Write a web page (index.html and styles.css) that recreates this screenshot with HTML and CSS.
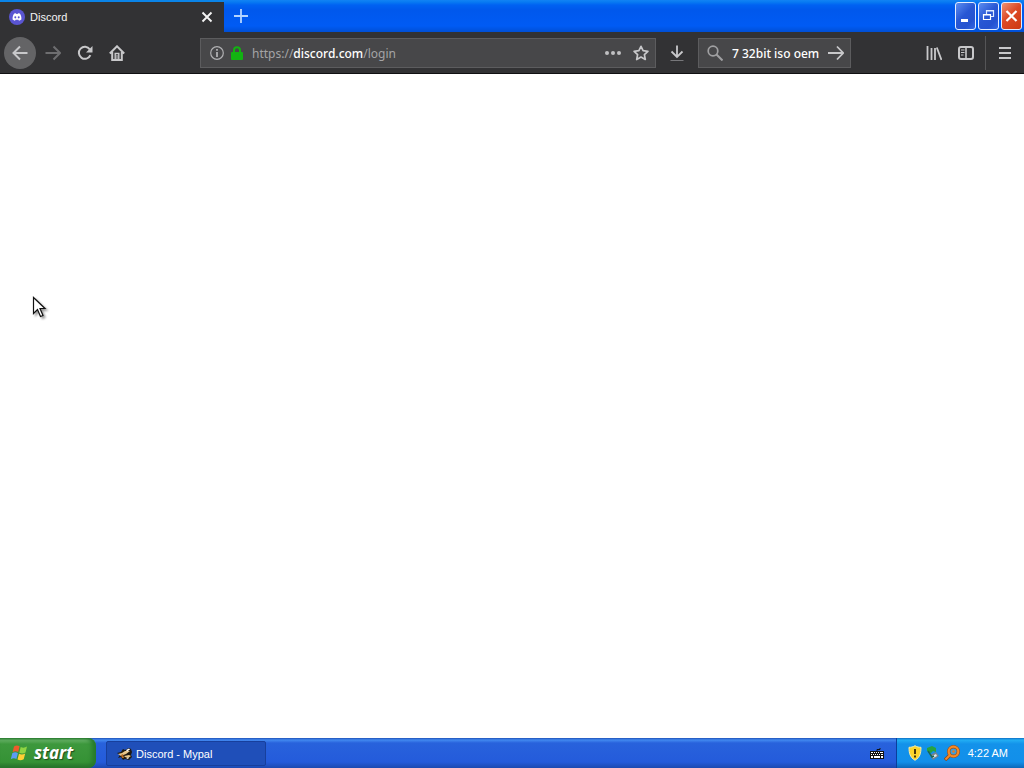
FILE: index.html
```
<!DOCTYPE html>
<html lang="en">

<head>
    <meta charset="UTF-8">
    <meta name="viewport" content="width=device-width, initial-scale=1.0">
    <title>Discord - Mypal</title>
    <link rel="stylesheet" href="styles.css">
</head>

<body>
    <div class="browser">
        <!-- tabs and window buttons -->
        <header class="titlebar">
            <div class="tab">
                <svg class="favicon" width="16" height="16" viewBox="0 0 16 16">
                    <circle cx="8" cy="8" r="8" fill="#5a55d2" />
                    <path d="M5.2 4.6 7 4.2l.4.7h1.2l.4-.7 1.8.4c1.2 1.7 1.8 3.6 1.6 5.9-.8.7-1.6 1-2.4 1.2l-.6-1H6.6l-.6 1c-.8-.2-1.6-.5-2.4-1.2-.2-2.3.4-4.2 1.6-5.9z" fill="#fff" />
                    <ellipse cx="6.3" cy="8.3" rx="1" ry="1.1" fill="#5a55d2" />
                    <ellipse cx="9.7" cy="8.3" rx="1" ry="1.1" fill="#5a55d2" />
                </svg>
                <span class="tab-label">Discord</span>
                <button class="tab-close" aria-label="Close tab">
                    <svg width="12" height="12" viewBox="0 0 12 12"><path d="M1.5 1.5l9 9M10.5 1.5l-9 9" stroke="#f4f4f4" stroke-width="1.9" fill="none" /></svg>
                </button>
            </div>
            <button class="new-tab" aria-label="New tab">
                <svg width="16" height="16" viewBox="0 0 16 16"><path d="M8 1v14M1 8h14" stroke="#b4d4ff" stroke-width="1.8" fill="none" /></svg>
            </button>
            <div class="window-buttons">
                <button class="win" aria-label="Minimize">
                    <svg width="19" height="26" viewBox="0 0 19 26"><path d="M5 16h7v3H5z" fill="#fff" /></svg>
                </button>
                <button class="win" aria-label="Restore">
                    <svg width="19" height="26" viewBox="0 0 19 26"><path d="M7.5 11V7.5h7v6H12M7 8h8" fill="none" stroke="#dceaff" stroke-width="1.2" /><path d="M4.500 11.5h7v5h-7zM4 12h8" fill="none" stroke="#fff" stroke-width="1.2" /></svg>
                </button>
                <button class="win win-close" aria-label="Close">
                    <svg width="19" height="26" viewBox="0 0 19 26"><path d="M4.5 8l10 10M14.5 8l-10 10" stroke="#fff" stroke-width="2.2" fill="none" /></svg>
                </button>
            </div>
        </header>

        <!-- navigation -->
        <nav class="toolbar">
            <button class="tool back" aria-label="Back">
                <svg width="16" height="16" viewBox="0 0 16 16"><path d="M8 1.5L1.5 8 8 14.5M2 8h13.5" /></svg>
            </button>
            <button class="tool forward" aria-label="Forward" disabled>
                <svg width="16" height="16" viewBox="0 0 16 16"><path d="M8.5 1.5L15 8l-6.5 6.5M14.5 8H.5" /></svg>
            </button>
            <button class="tool" aria-label="Reload">
                <svg width="16" height="16" viewBox="0 0 16 16"><path d="M13.4 10.2A6 6 0 1 1 12.8 4.400" /><path d="M15.5 1v6.5H9z" fill="#c8c8ca" stroke="none" /></svg>
            </button>
            <button class="tool" aria-label="Home">
                <svg width="16" height="16" viewBox="0 0 16 16"><path d="M.8 8.5L8 1.3l7.2 7.2M3.2 7v8h9.6V7" /><path d="M6.2 15V8.5h3.6V15" stroke-width="1.4" /><path d="M8 10v5" stroke-width="1" /></svg>
            </button>
            <div class="spacer"></div>
            <div class="field url-field">
                <svg width="14" height="14" viewBox="0 0 14 14" fill="none" stroke="#b0b0b2"><circle cx="7" cy="7" r="6.3" stroke-width="1.2" /><path d="M7 6v5M7 3v1.8" stroke-width="1.8" /></svg>
                <svg class="lock" width="12" height="14" viewBox="0 0 12 14"><path d="M3 7V4.2a3 3 0 0 1 6 0V7" fill="none" stroke="#12b312" stroke-width="2" /><rect y="6" width="12" height="8" rx="1" fill="#12b312" /></svg>
                <a class="url" href="#">https://<b>discord.com</b>/login</a>
                <button class="in-field" aria-label="Page actions">
                    <svg width="16" height="16" viewBox="0 0 16 16" fill="#c0c0c2"><circle cx="2" cy="8" r="2" /><circle cx="8" cy="8" r="2" /><circle cx="14" cy="8" r="2" /></svg>
                </button>
                <button class="in-field" aria-label="Bookmark">
                    <svg width="16" height="16" viewBox="0 0 16 16"><path d="M8 1.3l2.1 4.4 4.8.6-3.5 3.3.9 4.9L8 12.1l-4.3 2.4.9-4.9L1.1 6.3l4.8-.6z" fill="none" stroke="#c8c8ca" stroke-width="1.7" stroke-linejoin="round" /></svg>
                </button>
            </div>
            <button class="tool download" aria-label="Downloads">
                <svg width="16" height="16" viewBox="0 0 16 16"><path d="M8 .5v11M2.5 6.5L8 12l5.5-5.5" stroke-width="1.8" /><path d="M1.5 15.5h13" stroke="#77777a" stroke-width="1" /></svg>
            </button>
            <form class="field search-field">
                <svg width="16" height="16" viewBox="0 0 16 16" fill="none" stroke="#a0a0a2"><circle cx="6" cy="6" r="4.8" stroke-width="1.7" /><path d="M9.5 9.5l6 6" stroke-width="2" /></svg>
                <input type="text" aria-label="Search" value="7 32bit iso oem">
                <button class="in-field" type="button" aria-label="Go">
                    <svg width="16" height="16" viewBox="0 0 16 16"><path d="M9 1.5L15.2 8 9 14.5M14.8 8H0" fill="none" stroke="#c8c8ca" stroke-width="1.8" /></svg>
                </button>
            </form>
            <div class="spacer"></div>
            <button class="tool" aria-label="Library">
                <svg width="16" height="16" viewBox="0 0 16 16"><path d="M1.5 1v14M5.5 3v12M9 3v12M10.8 2.5L15.5 15" stroke-width="1.8" /></svg>
            </button>
            <button class="tool" aria-label="Sidebars">
                <svg width="16" height="16" viewBox="0 0 16 16"><rect x="1" y="2" width="14" height="12" rx="2" /><path d="M8 2v12" stroke-width="1.6" /><path d="M3 5h3.5M3 7.5h3.5M3 10h2.5" stroke-width="1" /></svg>
            </button>
            <div class="separator"></div>
            <button class="tool" aria-label="Menu">
                <svg width="16" height="16" viewBox="0 0 16 16"><path d="M2 3h12M2 8h12M2 13h12" /></svg>
            </button>
        </nav>

        <main class="page"></main>
    </div>

    <!-- taskbar -->
    <footer class="taskbar">
        <button class="start">
            <svg width="20" height="20" viewBox="0 0 20 20">
                <path d="M4 3.5C6 2 7.800 2.200 9.6 3.3L8.2 9.1C6.4 8 4.5 8 2.6 9.2z" fill="#ee5b2c" />
                <path d="M10.7 3.9c2 1.1 4 1 6.3-.3l-1.5 5.8c-2.2 1.3-4.2 1.3-6.2.3z" fill="#8fd443" />
                <path d="M2.3 10.3c2-1.3 3.8-1.2 5.6-.1l-1.5 5.8c-1.8-1-3.6-1.1-5.6.3z" fill="#5c9cf4" />
                <path d="M9 10.8c2 1 4 1 6.2-.3l-1.5 5.8c-2.2 1.3-4.2 1.3-6.2.3z" fill="#ffcf35" />
            </svg>
            <span>start</span>
        </button>
        <button class="task">
            <svg width="16" height="16" viewBox="0 0 16 16">
                <path d="M0 7l4-1 2-3 2 1 4-2 2 1 1 3-1 3 1 2-3 3-4-1-2 1-2-3-3 1 2-3z" fill="#20180f" />
                <path d="M1 8l4-1 3-2 5 0-4 3-5 2zM7 10l5-1 2 1-3 2-3-1z" fill="#e7c58a" />
                <path d="M9 4l3-1.5 1 1L10 5.500zM9 12l3-.5-1 1.500z" fill="#fff" />
                <path d="M4 9l2-1 1 4-2 0z" fill="#b66a25" />
            </svg>
            <span>Discord - Mypal</span>
        </button>
        <svg class="keyboard" width="14" height="12" viewBox="0 0 14 12">
            <path d="M7 4V2.500h3V1" stroke="#111" fill="none" />
            <rect y="4" width="14" height="8" fill="#111" />
            <path d="M1 5h2v1H1zM4 5h1v1H4zM6 5h1v1H6zM8 5h1v1H8zM10 5h3v1h-3zM1 7h1v1H1zM3 7h1v1H3zM5 7h1v1H5zM7 7h1v1H7zM9 7h1v1H9zM11 7h2v1h-2zM1 9h2v2H1zM4 9h6v2H4zM11 9h2v2h-2z" fill="#fff" />
        </svg>
        <div class="tray">
            <svg width="14" height="16" viewBox="0 0 14 16"><path d="M7 .7c2 1.3 4 1.6 6 1.6 0 6-1 10-6 13C2 12.3 1 8.3 1 2.3c2 0 4-.3 6-1.6z" fill="#fbd52c" stroke="#f4eeb0" /><path d="M7 4v5M7 10.500v2" stroke="#47370a" stroke-width="2" /></svg>
            <svg width="16" height="16" viewBox="0 0 16 16"><path d="M5 10l6-3 3 4-6 4z" fill="#75838b" /><path d="M7 11l4-2 1 2-4 2z" fill="#e0e8eb" /><path d="M2 3l5-2 4 2v4L8 6 6 8 2 6z" fill="#27a341" /><path d="M3 6l4 6 2-1" fill="none" stroke="#1b6552" stroke-width="1.5" /></svg>
            <svg width="16" height="16" viewBox="0 0 16 16"><path d="M6 10l-5 5" stroke="#8d451b" stroke-width="3.5" /><circle cx="9.5" cy="6.5" r="4.8" fill="#3b9fdd" stroke="#9b4c18" stroke-width="3.4" /><circle cx="9.5" cy="6.5" r="4.8" fill="none" stroke="#f58a25" stroke-width="2.2" /><path d="M6 10l-4.5 4.5" stroke="#f58a25" stroke-width="2" /><circle cx="9.5" cy="6.5" r="1.3" fill="#e97b24" /></svg>
            <time class="clock">4:22 AM</time>
        </div>
    </footer>

    <svg class="cursor" width="16" height="24" viewBox="0 0 16 24">
        <path d="M1.5 1.5v16l4-4 3 7 2.5-1-3-7h5z" fill="#fff" stroke="#111" stroke-width="1.2" />
    </svg>
</body>

</html>
```
FILE: styles.css
```
* {
    box-sizing: border-box;
}

body {
    margin: 0;
    min-height: 100vh;
    display: flex;
    flex-direction: column;
    background: #fff;
    font-family: "Liberation Sans", Arial, sans-serif;
    font-size: 11px;
}

button {
    display: flex;
    align-items: center;
    justify-content: center;
    margin: 0;
    padding: 0;
    border: 0;
    background: none;
    font-family: inherit;
    font-size: inherit;
    color: inherit;
}

svg {
    display: block;
    flex: none;
}

.browser {
    flex: 1;
    display: flex;
    flex-direction: column;
}

/* title bar */
.titlebar {
    display: flex;
    height: 32px;
    background: linear-gradient(#1283f4 0, #087bf2 2px, #0062f2 5px, #0058ec 10px, #005bf4 26px, #004fd5 32px);
}

.tab {
    display: flex;
    align-items: center;
    gap: 5px;
    width: 224px;
    padding: 0 11px 0 9px;
    border-top: 2px solid #0a84e8;
    background: #323234;
    color: #f4f4f4;
}

.tab-label {
    flex: 1;
}

.new-tab {
    width: 33px;
}

.window-buttons {
    display: flex;
    gap: 2px;
    margin-left: auto;
    padding: 2px 2px 0 0;
}

.win {
    width: 21px;
    height: 28px;
    border: 1px solid #e4edff;
    border-radius: 3px;
    background: linear-gradient(135deg, #5c8df0, #2857d4 45%, #2552d0 75%, #3468e4);
}

.win-close {
    background: linear-gradient(135deg, #ee9273, #dd4a26 45%, #cc3812);
}

/* toolbar */
.toolbar {
    display: flex;
    align-items: center;
    height: 42px;
    padding: 1px 3px 0 4px;
    border-bottom: 1px solid #101012;
    background: #323234;
}

.tool {
    width: 32px;
    height: 32px;
    flex: none;
}

.tool svg {
    fill: none;
    stroke: #c8c8ca;
    stroke-width: 2;
}

.back {
    margin-right: 1px;
    border-radius: 50%;
    background: #646466;
}

.forward svg {
    stroke: #6e6e70;
}

.download {
    width: 42px;
}

.spacer {
    flex: 1 1 67px;
}

.field {
    display: flex;
    align-items: center;
    height: 30px;
    border: 1px solid #5c5c5e;
    background: #474749;
    font-family: "Noto Sans", sans-serif;
    font-size: 12px;
}

.url-field {
    flex: 7 1 456px;
    padding: 0 6px 0 9px;
}

.lock {
    margin-left: 7px;
}

.url {
    flex: 1;
    margin-left: 9px;
    color: #a4a4a6;
    text-decoration: none;
}

.url b {
    font-weight: 500;
    color: #fff;
}

.in-field {
    width: 16px;
    height: 28px;
    flex: none;
}

.in-field + .in-field {
    margin-left: 12px;
}

.search-field {
    width: 153px;
    padding: 0 6px 0 8px;
}

.search-field input {
    flex: 1;
    min-width: 0;
    margin-left: 9px;
    padding: 0;
    border: 0;
    outline: 0;
    background: none;
    color: #fff;
    font-family: inherit;
    font-size: 12px;
    font-weight: 500;
}

.separator {
    width: 1px;
    height: 34px;
    margin: 0 3px;
    background: #555557;
}

.page {
    flex: 1;
    background: #fff;
}

/* taskbar */
.taskbar {
    display: flex;
    align-items: stretch;
    height: 30px;
    background: linear-gradient(#1f52b8 0, #4289f0 2px, #2862dc 5px, #245bdb 24px, #1c49b0 30px);
    color: #fff;
}

.start {
    width: 96px;
    justify-content: flex-start;
    gap: 4px;
    padding: 0 0 1px 10px;
    border-radius: 0 8px 8px 0;
    background: linear-gradient(#2b7a32 0, #66b266 2px, #3d983d 6px, #359235 24px, #26702a 30px);
    box-shadow: inset -4px 0 4px #267a2c;
    font-family: "Noto Sans", sans-serif;
    font-size: 17px;
    font-weight: bold;
    font-style: italic;
    text-shadow: 1px 1px 1px #1c4a1c;
}

.task {
    width: 160px;
    justify-content: flex-start;
    gap: 3px;
    margin: 3px 0 2px 10px;
    padding-left: 10px;
    border: 1px solid #173f9c;
    border-radius: 2px;
    background: #1f4fb9;
}

.keyboard {
    align-self: center;
    margin: 0 12px 0 auto;
}

.tray {
    display: flex;
    align-items: center;
    gap: 3px;
    padding: 0 16px 0 11px;
    border-left: 1px solid #0b3f9c;
    background: linear-gradient(#0f6fc4 0, #22aef4 2px, #1392ea 6px, #128fea 24px, #0c67b8 30px);
}

.clock {
    margin-left: 5px;
}

/* mouse pointer over the page */
.cursor {
    position: absolute;
    left: 32px;
    top: 296px;
    filter: drop-shadow(2px 2px 1px rgba(0, 0, 0, 0.4));
}
```
